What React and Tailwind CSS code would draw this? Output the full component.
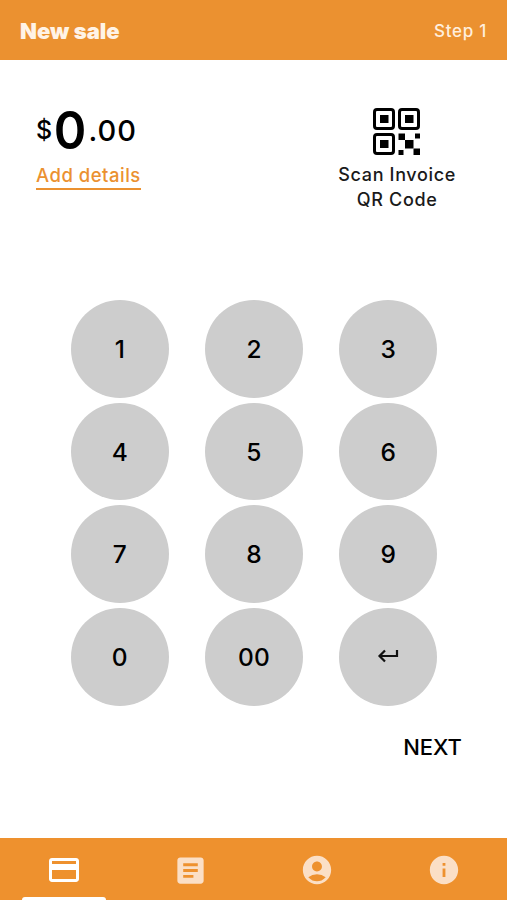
import React, { useState } from 'react';
import {
  MdOutlineCreditCard,
  MdArticle,
  MdAccountCircle,
  MdInfo,
} from 'react-icons/md';

const keys = ['1', '2', '3', '4', '5', '6', '7', '8', '9', '0', '00', 'enter'];

const tabs = [
  { id: 'sale', icon: MdOutlineCreditCard, size: 36 },
  { id: 'history', icon: MdArticle, size: 35 },
  { id: 'account', icon: MdAccountCircle, size: 34 },
  { id: 'info', icon: MdInfo, size: 34 },
];

const QrIcon = () => (
  <svg width="48" height="48" viewBox="0 0 48 48" fill="none">
    <g stroke="#000" strokeWidth="3">
      <rect x="1.5" y="1.5" width="19" height="19" rx="2.5" />
      <rect x="26.5" y="1.5" width="19" height="19" rx="2.5" />
      <rect x="1.5" y="26.5" width="19" height="19" rx="2.5" />
    </g>
    <g fill="#000">
      <rect x="7" y="7" width="8.5" height="8" />
      <rect x="32" y="7" width="8.5" height="8" />
      <rect x="7" y="32" width="8.5" height="8" />
      <rect x="25.5" y="25.5" width="6.5" height="6.5" />
      <rect x="42" y="25.5" width="5" height="5" />
      <rect x="32" y="32" width="8.5" height="8.5" />
      <rect x="25.5" y="42" width="5" height="5" />
      <rect x="40.5" y="40.5" width="6.5" height="6.5" />
    </g>
  </svg>
);

const EnterIcon = () => (
  <svg className="mb-0.5" width="22" height="14" viewBox="0 0 22 14" fill="none" stroke="#111" strokeWidth="2.2">
    <path d="M20 1V7H3M8 1.4L2.5 7L8 12.6" />
  </svg>
);

const App = () => {
  const [activeTab, setActiveTab] = useState('sale');

  return (
    <div className="flex h-[900px] w-[507px] flex-col overflow-hidden bg-white font-['Inter',sans-serif] text-black">
      <header className="flex h-[60px] shrink-0 items-center justify-between bg-[#eb9130] pt-0.5 pr-5 pl-5">
        <h1 className="text-[22px] leading-7 font-black text-[#fff3e6]">New sale</h1>
        <span className="text-[17px] leading-6 font-medium tracking-[0.7px] text-[#ffeedd]">Step 1</span>
      </header>

      <main className="flex flex-1 flex-col">
        <section className="flex h-[240px] justify-between pt-12 pr-[51px] pl-9">
          <div className="flex flex-col items-start">
            <div className="flex h-[46px] items-center">
              <span className="text-[25px] font-medium">$</span>
              <span className="ml-px scale-x-95 text-[52px] leading-none font-semibold">0</span>
              <span className="ml-px text-[29px] font-medium tracking-[1px]">.00</span>
            </div>
            <button className="mt-2 h-[28px] border-b-2 border-[#eb9130] text-[18.5px] leading-[27px] font-medium tracking-[0.5px] text-[#eb9130]">
              Add details
            </button>
          </div>

          <button className="flex flex-col items-center text-[18px] leading-[25px] font-medium tracking-[0.65px] text-[#1a1a1a]">
            <QrIcon />
            <span className="mt-1.5">Scan Invoice</span>
            <span>QR Code</span>
          </button>
        </section>

        <section className="grid grid-cols-[repeat(3,97.5px)] gap-x-[36.7px] gap-y-[5.2px] pl-[71px]">
          {keys.map((key) => (
            <button
              key={key}
              className="flex h-[97.5px] items-center justify-center rounded-full bg-[#cdcdcd] pt-px text-[24.5px] font-medium"
            >
              {key === 'enter' ? <EnterIcon /> : key}
            </button>
          ))}
        </section>

        <div className="flex justify-end pt-[25px] pr-[45px]">
          <button className="text-[22px] leading-8 font-medium">NEXT</button>
        </div>
      </main>

      <nav className="grid h-[62px] shrink-0 grid-cols-4 bg-[#ee912e]">
        {tabs.map(({ id, icon: Icon, size }) => (
          <button
            key={id}
            onClick={() => setActiveTab(id)}
            className={`relative flex items-center justify-center pt-0.5 ${activeTab === id ? 'pl-0.5 text-white' : 'text-[#fbdfc6]'}`}
          >
            <Icon size={size} />
            {activeTab === id && (
              <span className="absolute bottom-0 left-[22px] h-[3px] w-[84px] rounded-t-sm bg-white" />
            )}
          </button>
        ))}
      </nav>
    </div>
  );
};

export default App;
